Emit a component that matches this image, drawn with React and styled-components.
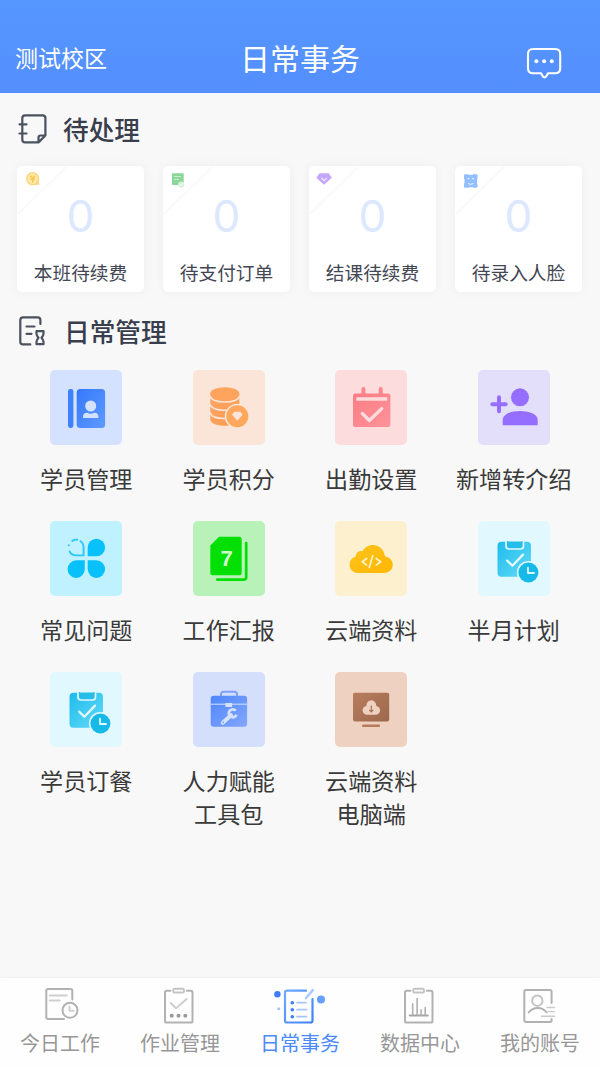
import React from "react";
import styled, { createGlobalStyle } from "styled-components";

const GlobalStyle = createGlobalStyle`
  * { box-sizing: border-box; }
  body {
    margin: 0;
    background: #f8f8f8;
    font-family: "Noto Sans CJK SC", sans-serif;
  }
`;

const Screen = styled.div`
  width: 600px;
  height: 1067px;
  display: flex;
  flex-direction: column;
  background: #f8f8f8;
  overflow: hidden;
`;

const Header = styled.header`
  height: 93px;
  flex: none;
  display: grid;
  grid-template-columns: 1fr auto 1fr;
  align-items: center;
  padding: 20px 38px 0 15px;
  color: #fff;
  background: linear-gradient(#5596ff, #548ffd);
`;

const Campus = styled.span`
  font-size: 23px;
  line-height: 34px;
`;

const Title = styled.h1`
  margin: 0 0 0 23px;
  font-size: 30px;
  font-weight: 400;
  line-height: 44px;
`;

const Message = styled.svg`
  justify-self: end;
  margin-top: 12px;
`;

const Main = styled.main`
  flex: 1;
`;

const SectionHead = styled.div`
  display: flex;
  align-items: center;
  height: 38px;
  padding-left: 17px;
  margin-top: ${(p) => p.$top}px;
  gap: ${(p) => p.$gap}px;
`;

const SectionIcon = styled.svg`
  fill: none;
  stroke: #4b515e;
  stroke-width: 2.2;
  stroke-linecap: round;
  stroke-linejoin: round;
`;

const SectionTitle = styled.h2`
  margin: 0;
  font-size: 25.7px;
  font-weight: 500;
  line-height: 38px;
  color: #393e4d;
`;

const Cards = styled.div`
  display: flex;
  gap: 19px;
  padding: 0 17px;
  margin-top: 18px;
`;

const Card = styled.div`
  position: relative;
  width: 127px;
  height: 126px;
  display: flex;
  flex-direction: column;
  align-items: center;
  border-radius: 5px;
  background: #fff;
  box-shadow: 0 0 12px rgba(0, 0, 0, 0.045);
`;

const CardCorner = styled.svg`
  position: absolute;
  left: 0;
  top: 0;
`;

const Count = styled.span`
  margin-top: 24px;
  font: 400 44px/53px Inter, sans-serif;
  color: #dce8fe;
`;

const CardLabel = styled.span`
  margin-top: 15px;
  font-size: 18.7px;
  line-height: 28px;
  color: #434653;
`;

const Grid = styled.div`
  display: grid;
  grid-template-columns: repeat(4, 142.5px);
  grid-auto-rows: 151px;
  padding: 0 15px;
  margin-top: 20px;
`;

const Entry = styled.div`
  display: flex;
  flex-direction: column;
  align-items: center;
`;

const Tile = styled.svg`
  display: block;
  flex: none;
  border-radius: 5px;
  background: ${(p) => p.$bg};
`;

const EntryLabel = styled.span`
  margin-top: 17px;
  font-size: 23.1px;
  line-height: 33px;
  color: #3a3a3a;
  text-align: center;
  white-space: pre;
`;

const NavBar = styled.nav`
  height: 89px;
  flex: none;
  display: grid;
  grid-template-columns: repeat(5, 1fr);
  background: #fefefe;
  box-shadow: 0 -1px 2px rgba(0, 0, 0, 0.03);
`;

const NavItem = styled.div`
  display: flex;
  flex-direction: column;
  align-items: center;
  padding-top: 7px;
  font-size: 20px;
  line-height: 30px;
  color: ${(p) => (p.$active ? "#4a8afc" : "#979797")};
`;

const NavIcon = styled.svg`
  display: block;
  margin-bottom: 3px;
  fill: none;
  stroke: #b2b2b2;
  stroke-width: 2;
  stroke-linecap: round;
  stroke-linejoin: round;
`;

const Gradient = ({ id, from, to }) => (
  <defs>
    <linearGradient id={id} x1="0" y1="0" x2="1" y2="1">
      <stop offset="0" stopColor={from} />
      <stop offset="1" stopColor={to} />
    </linearGradient>
  </defs>
);

const BookArt = () => (
  <>
    <Gradient id="book" from="#3478fb" to="#609afe" />
    <rect x="18" y="19" width="5.4" height="39" rx="2.4" fill="#3f80fc" />
    <rect x="26.7" y="19" width="28.4" height="39" rx="3.5" fill="url(#book)" />
    <circle cx="40.7" cy="36" r="5.5" fill="#d4e2ff" />
    <path d="M33 48v-1.2q0-4 4.2-4 3.5 2 7 0 4.2 0 4.2 4V48z" fill="#d4e2ff" />
  </>
);

const CoinsArt = () => (
  <>
    <Gradient id="coins" from="#fea565" to="#fb9b50" />
    <path d="M17.3 23.5v26c0 3.7 6 6.3 14.5 6.3s14.5-2.6 14.5-6.3v-26z" fill="url(#coins)" />
    <ellipse cx="31.8" cy="23.7" rx="14.5" ry="6.5" fill="#ffa45d" />
    <path d="M17 26c1 4 7 6 14.8 6s13.8-2 14.8-6M17 34.3c1 4 7 6 14.8 6s13.8-2 14.8-6M17 42.5c1 4 7 6 14.8 6s13.8-2 14.8-6" fill="none" stroke="#fae5d8" strokeWidth="1.6" />
    <circle cx="44.3" cy="46.3" r="12.6" fill="#fae5d8" />
    <circle cx="44.3" cy="46.3" r="11" fill="#fea75d" />
    <path d="M41.2 41.8h6.2l2.2 3-5.3 6-5.3-6z" fill="#fae5d8" />
  </>
);

const CalendarArt = () => (
  <>
    <Gradient id="calendar" from="#fc7c84" to="#fd9499" />
    <path d="M28.4 19v8M45.7 19v8" stroke="#fc868d" strokeWidth="4" strokeLinecap="round" />
    <rect x="18" y="23.5" width="37.4" height="33.5" rx="2.5" fill="url(#calendar)" />
    <rect x="21.3" y="27.2" width="31" height="3.5" rx="0.5" fill="#fddcde" />
    <path d="M27.3 43.5l7 7L46.8 38.6" fill="none" stroke="#fddcde" strokeWidth="3.3" strokeLinecap="round" strokeLinejoin="round" />
  </>
);

const AddPersonArt = () => (
  <>
    <circle cx="42" cy="27.3" r="9" fill="#956eff" />
    <path d="M24.7 55.3V50c0-5.5 7.5-9 17.5-9s17.5 3.5 17.5 9v5.3z" fill="#956eff" />
    <path d="M21 27.3v14M14.3 34.3h13.4" stroke="#956eff" strokeWidth="4" strokeLinecap="round" />
  </>
);

const PetalsArt = () => (
  <>
    <g fill="#08c1fb">
      <path d="M37.7 35.3V26.5a8.7 8.8 0 1 1 8.7 8.8z" />
      <path d="M34.8 39.3V48a8.6 8.8 0 1 1-8.6-8.7z" />
      <path d="M37.7 39.3h8.7a8.7 8.8 0 1 1-8.7 8.8z" />
    </g>
    <g fill="none" stroke="#2cc8fa" strokeWidth="1.9" strokeLinecap="round">
      <path d="M30.5 20.3q3.1 2 3.1 6.5v7.6h-7.2q-5.2 0-6.8-4" />
      <path d="M22.3 19.9q2.4-1.6 5-1.2M18.7 24.3v.1" />
    </g>
  </>
);

const ReportArt = () => (
  <>
    <path d="M26 15.7h20.2a2.5 2.5 0 0 1 2.5 2.5v33.5a2.5 2.5 0 0 1-2.5 2.5H19.8a2.5 2.5 0 0 1-2.5-2.5V24.5z" fill="#04df06" />
    <path d="M53.2 22v34.3a2.3 2.3 0 0 1-2.3 2.3H24.3" fill="none" stroke="#04df06" strokeWidth="2.7" strokeLinecap="round" />
    <text x="33.7" y="44.5" textAnchor="middle" fontFamily="Liberation Sans, sans-serif" fontSize="22" fontWeight="700" fill="#d1ffcf">7</text>
  </>
);

const CloudCodeArt = () => (
  <>
    <Gradient id="cloud" from="#ffc31b" to="#ffb704" />
    <path d="M23 52c-5 0-8.4-3.5-8.4-8.2 0-4.2 2.8-7.5 6.2-8.2-.2-3.8 3-6.3 6.8-5.5 2.2-4 6.2-6.2 10.7-6 6 .2 10.800 4.700 11.600 11.200 4.300.7 7.800 4 7.800 8.500 0 4.700-3.700 8.200-8.700 8.200z" fill="url(#cloud)" />
    <path d="M31.700 37.500l-4.500 3.300 4.500 3.300M41.200 37.500l4.500 3.300-4.500 3.300M37.800 34.500l-3.500 12" fill="none" stroke="#fff2cc" strokeWidth="1.700" strokeLinecap="round" strokeLinejoin="round" />
  </>
);

const PlanArt = ({ id }) => (
  <>
    <Gradient id={id} from="#1dbbec" to="#65dbf8" />
    <rect x="19.5" y="20.7" width="33.5" height="35" rx="4" fill={`url(#${id})`} />
    <path d="M28 20v5q0 3 3 3h11.5q3 0 3-3v-5" fill="#27bde9" stroke="#e2f9ff" strokeWidth="1.7" />
    <path d="M30 20h13.5" stroke="#e2f9ff" strokeWidth="1.2" />
    <path d="M29.2 39.6l5.2 5.2L45 33.6" fill="none" stroke="#e2f9ff" strokeWidth="2.3" strokeLinecap="round" strokeLinejoin="round" />
    <circle cx="50.4" cy="51.5" r="11.5" fill="#e2f9ff" />
    <circle cx="50.4" cy="51.5" r="10" fill="#16b9e7" />
    <path d="M50 46.7v5.3h6" fill="none" stroke="#e2f9ff" strokeWidth="1.8" strokeLinecap="round" strokeLinejoin="round" />
  </>
);

const ToolboxArt = () => (
  <>
    <Gradient id="toolbox" from="#4f86fa" to="#83a7fd" />
    <path d="M28 24.5v-2.2q0-2.6 2.6-2.6h10.8q2.6 0 2.6 2.6v2.2" fill="none" stroke="#7da2fb" strokeWidth="2" />
    <rect x="17.7" y="23.7" width="36.4" height="31" rx="3" fill="url(#toolbox)" />
    <path d="M17.7 32.2h36.4" stroke="#d4e1ff" strokeWidth="1" />
    <rect x="32.4" y="30.9" width="6.8" height="4.2" rx="0.5" fill="#d4e1ff" />
    <path d="M29.8 50.8l8.2-7.6" stroke="#d4e1ff" strokeWidth="4" strokeLinecap="round" />
    <path d="M42.8 38.600a4 4 0 1 0 .7 4.300" fill="none" stroke="#d4e1ff" strokeWidth="2.700" />
    <circle cx="30.3" cy="50.4" r="0.8" fill="#7399f6" />
  </>
);

const MonitorArt = () => (
  <>
    <Gradient id="monitor" from="#b87d5f" to="#9d684c" />
    <rect x="18" y="20.7" width="36.2" height="28.7" rx="1.8" fill="url(#monitor)" />
    <rect x="27" y="52.4" width="18" height="2.7" rx="1" fill="#b77b5c" />
    <path d="M32.5 42.7c-3 0-4.9-1.9-4.9-4.5 0-2.4 1.7-4.1 3.7-4.3.3-3.6 2.2-5.7 5-5.7s4.700 2.100 5 5.700c2 .2 3.800 1.900 3.800 4.300 0 2.600-2 4.500-4.900 4.500z" fill="#eed1c1" />
    <path d="M36.300 33.500v6.300M34.300 37.900l2 2.100 2-2.100" fill="none" stroke="#a87156" strokeWidth="1.200" />
  </>
);

const entries = [
  { label: "学员管理", bg: "#d4e1ff", art: <BookArt /> },
  { label: "学员积分", bg: "#fae5d8", art: <CoinsArt /> },
  { label: "出勤设置", bg: "#fddcde", art: <CalendarArt /> },
  { label: "新增转介绍", bg: "#e3defa", art: <AddPersonArt /> },
  { label: "常见问题", bg: "#bff1ff", art: <PetalsArt /> },
  { label: "工作汇报", bg: "#b8f2b8", art: <ReportArt /> },
  { label: "云端资料", bg: "#fcf0cf", art: <CloudCodeArt /> },
  { label: "半月计划", bg: "#e2f8ff", art: <PlanArt id="plan" /> },
  { label: "学员订餐", bg: "#e2f8ff", art: <PlanArt id="meal" /> },
  { label: "人力赋能\n工具包", bg: "#d4dffb", art: <ToolboxArt /> },
  { label: "云端资料\n电脑端", bg: "#eed1c1", art: <MonitorArt /> },
];

const CoinMark = () => (
  <>
    <circle cx="15.7" cy="12.7" r="6" fill="#ffe7a5" stroke="#fbd57a" strokeWidth="1.3" />
    <path d="M13.300 9.800l2.400 2.700 2.400-2.700M15.700 12.500v4M13.600 13.200h4.200" fill="none" stroke="#f8c653" strokeWidth="1.400" />
    <path d="M18.5 18.7l2.5-5.2 1.2 5.2z" fill="#fbd57a" />
  </>
);

const OrderMark = () => (
  <>
    <rect x="9" y="7.3" width="11.7" height="11.7" rx="0.8" fill="#8bd799" />
    <path d="M11 10.5h7M11 13.5h5" stroke="#c8efcd" strokeWidth="1.1" />
    <circle cx="18.2" cy="18.5" r="3.1" fill="#d5f1d8" />
    <path d="M16.6 18.3l1.3 1.3 2-2.2" fill="none" stroke="#fff" strokeWidth="0.9" />
  </>
);

const DiamondMark = () => (
  <>
    <path d="M10.5 7.300h9.200l3.100 4.400L15 18.800l-7.700-7.100z" fill="#c2a7fa" />
    <path d="M12.3 12l2.8 2.7 2.8-2.7" fill="none" stroke="#efe7ff" strokeWidth="1.3" />
  </>
);

const FaceMark = () => (
  <>
    <rect x="9" y="8.3" width="13.5" height="13.5" rx="1" fill="#91bfff" />
    <path d="M13.5 8.300h4.500M13.500 21.800h4.500M9 13v4.500M22.500 13v4.500" stroke="#fff" strokeWidth="1" />
    <path d="M12.5 12.700h2M17 12.700h2M13 17.300q2.700 2 5.400 0" fill="none" stroke="#dceaff" strokeWidth="1.200" />
  </>
);

const pending = [
  { label: "本班待续费", mark: <CoinMark /> },
  { label: "待支付订单", mark: <OrderMark /> },
  { label: "结课待续费", mark: <DiamondMark /> },
  { label: "待录入人脸", mark: <FaceMark /> },
];

const TodayIcon = () => (
  <>
    <path d="M42.300 14.500V5.700q0-1.700-1.700-1.700H18q-1.700 0-1.700 1.700v26.600q0 1.700 1.700 1.700h16" />
    <path d="M19.7 10.500h17M19.700 15.600h10" stroke="#cfcfcf" />
    <circle cx="40" cy="25.3" r="7.5" />
    <path d="M39.5 21.500v4.300h4" stroke="#cfcfcf" />
  </>
);

const ClipboardFrame = () => (
  <>
    <path d="M20.500 5.700H16.600q-1.600 0-1.600 1.600v28.600q0 1.600 1.600 1.600h24.300q1.600 0 1.600-1.600V7.300q0-1.600-1.600-1.600h-4" />
    <rect x="23.3" y="3.8" width="10.7" height="3.8" rx="1.3" stroke="#c4c4c4" />
  </>
);

const HomeworkIcon = () => (
  <>
    <ClipboardFrame />
    <path d="M20.700 18l5.300 5.300 10.700-9.300" stroke="#cfcfcf" />
    <g fill="#999" stroke="none">
      <circle cx="21.7" cy="30.7" r="2" />
      <circle cx="28.5" cy="30.7" r="2" />
      <circle cx="35.3" cy="30.7" r="2" />
    </g>
  </>
);

const RoutineIcon = () => (
  <>
    <Gradient id="routine" from="#70abff" to="#3d7ffa" />
    <path d="M36 5.700H17q-2 0-2 2v27.800q0 2 2 2h23.500q2 0 2-2V14" stroke="url(#routine)" strokeWidth="2.200" />
    <path d="M36 13l6.800-7.800" stroke="#a9cbff" strokeWidth="2.600" />
    <path d="M27 17.700h9M27 24.700h9.500M27 31.700h9.500" stroke="#a4c5ff" strokeWidth="1.700" />
    <g fill="#3c7dfa" stroke="none">
      <circle cx="22.3" cy="17.7" r="1.8" />
      <circle cx="22.3" cy="24.7" r="1.8" />
      <circle cx="22.3" cy="31.7" r="1.8" />
      <circle cx="7.4" cy="9.2" r="3.2" />
      <circle cx="8.7" cy="23.7" r="1.5" fill="#a4c5ff" />
      <circle cx="51" cy="14.4" r="4" fill="#659fff" />
    </g>
  </>
);

const DataIcon = () => (
  <>
    <ClipboardFrame />
    <path d="M22.700 29.500V18.700M27.100 29.500V13.500M31.100 29.500v-4.700M35.200 29.500v-7" strokeWidth="1.600" />
    <path d="M19.700 30.400h18" stroke="#a6a6a6" />
  </>
);

const AccountIcon = () => (
  <>
    <path d="M41.600 18V6.700q0-1.700-1.700-1.700H16q-1.700 0-1.700 1.700v28.600q0 1.700 1.700 1.700h23.900q1.700 0 1.700-1.700V34" />
    <circle cx="27.3" cy="15.7" r="5.2" stroke="#c4c4c4" />
    <path d="M18.700 27.500q3.500-4.500 9-4.500t9 4.500" />
    <path d="M37 22.500h7.500M38.500 26.600h6M31.500 31.200h13" stroke="#cacaca" strokeWidth="1.400" />
  </>
);

const tabs = [
  { label: "今日工作", icon: <TodayIcon /> },
  { label: "作业管理", icon: <HomeworkIcon /> },
  { label: "日常事务", icon: <RoutineIcon />, active: true },
  { label: "数据中心", icon: <DataIcon /> },
  { label: "我的账号", icon: <AccountIcon /> },
];

export default function App() {
  return (
    <Screen>
      <GlobalStyle />
      <Header>
        <Campus>测试校区</Campus>
        <Title>日常事务</Title>
        <Message width="36" height="34" viewBox="0 0 36 34" fill="none" stroke="#fff" strokeWidth="2.1" strokeLinejoin="round">
          <path d="M7 3h22.200q5 0 5 5v14.300q0 5-5 5h-7.200l-2 3.300q-1.500 1.600-3 0l-2-3.300H7q-5 0-5-5V8q0-5 5-5z" />
          <g fill="#fff" stroke="none">
            <circle cx="10.4" cy="15.2" r="2" />
            <circle cx="18.1" cy="15.2" r="2" />
            <circle cx="25.8" cy="15.2" r="2" />
          </g>
        </Message>
      </Header>

      <Main>
        <SectionHead $top={17} $gap={14}>
          <SectionIcon width="32" height="32" viewBox="0 0 32 32">
            <path d="M21.500 29.400H8q-2.700 0-2.700-2.700V5q0-2.700 2.700-2.700h17.700q2.700 0 2.700 2.700v17.500l-6.900 6.900v-4.700q0-2.200 2.200-2.200h4.700M2.500 11.300h7M2.500 20.500h7" />
          </SectionIcon>
          <SectionTitle>待处理</SectionTitle>
        </SectionHead>

        <Cards>
          {pending.map((item) => (
            <Card key={item.label}>
              <CardCorner width="60" height="60" viewBox="0 0 60 60">
                <path d="M1 48L49 1" stroke="#fafafa" strokeWidth="2.2" />
                {item.mark}
              </CardCorner>
              <Count>0</Count>
              <CardLabel>{item.label}</CardLabel>
            </Card>
          ))}
        </Cards>

        <SectionHead $top={20} $gap={15}>
          <SectionIcon width="32" height="32" viewBox="0 0 32 32">
            <path d="M13.300 29.400H6q-2.700 0-2.700-2.700V5q0-2.700 2.700-2.700h14.700q2.700 0 2.700 2.700v4M9.500 11.500h8M9.500 18.800h5" />
            <path d="M19.500 16.200h7v2.500q0 1.700-2 4 2 2.300 2 4v2.500h-7v-2.500q0-1.700 2-4-2-2.300-2-4z" />
          </SectionIcon>
          <SectionTitle>日常管理</SectionTitle>
        </SectionHead>

        <Grid>
          {entries.map((entry) => (
            <Entry key={entry.label}>
              <Tile width="72" height="75" viewBox="0 0 72 75" $bg={entry.bg}>
                {entry.art}
              </Tile>
              <EntryLabel>{entry.label}</EntryLabel>
            </Entry>
          ))}
        </Grid>
      </Main>

      <NavBar>
        {tabs.map((tab) => (
          <NavItem key={tab.label} $active={tab.active}>
            <NavIcon width="60" height="40" viewBox="0 0 60 40">
              {tab.icon}
            </NavIcon>
            {tab.label}
          </NavItem>
        ))}
      </NavBar>
    </Screen>
  );
}
